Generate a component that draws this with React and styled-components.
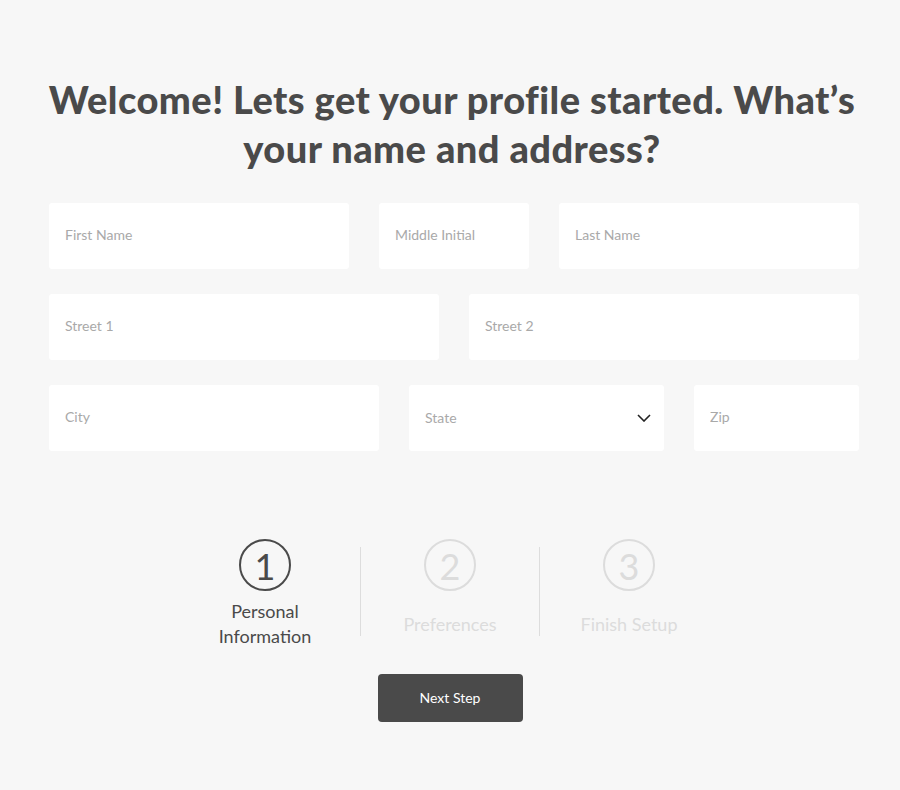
import React from "react";
import styled, { createGlobalStyle } from "styled-components";

const GlobalStyle = createGlobalStyle`
  * { box-sizing: border-box; }
  body {
    margin: 0;
    background: #f7f7f7;
    font-family: Lato, "Noto Sans", sans-serif;
  }
`;

const Page = styled.div`
  width: 900px;
  min-height: 790px;
  padding-top: 75px;
`;

const Title = styled.h1`
  margin: 0 0 30px 4px;
  padding: 0 40px;
  font-size: 38px;
  line-height: 49px;
  font-weight: 900;
  color: #4a4a4a;
  text-align: center;
  letter-spacing: 0.45px;
`;

const Row = styled.div`
  display: grid;
  grid-template-columns: ${props => props.cols};
  column-gap: 30px;
  width: 810px;
  margin: 0 0 25px 49px;
`;

const Field = styled.input`
  height: 66px;
  width: 100%;
  border: none;
  border-radius: 3px;
  background: #fff;
  padding: 0 16px 4px;
  font-family: Lato, "Noto Sans", sans-serif;
  font-size: 14px;
  color: #4a4a4a;
  outline: none;
  &::placeholder { color: #a9a9a9; }
`;

const SelectBox = styled.div`
  height: 66px;
  border-radius: 3px;
  background: #fff;
  padding: 0 13px 0 16px;
  display: flex;
  align-items: center;
  justify-content: space-between;
  font-size: 14px;
  color: #a9a9a9;
  span { margin-bottom: 2px; }
`;

const Stepper = styled.div`
  display: flex;
  justify-content: center;
  margin-top: 88px;
`;

const Step = styled.div`
  width: 178px;
  display: flex;
  flex-direction: column;
  align-items: center;
  color: ${props => (props.active ? "#4a4a4a" : "#dcdcdc")};
  &:first-child { padding-right: 12px; }
`;

const Circle = styled.div`
  width: 52px;
  height: 52px;
  border-radius: 50%;
  border: 2px solid currentColor;
  display: flex;
  align-items: center;
  justify-content: center;
  font-size: 36px;
  font-weight: 400;
  line-height: 1;
  padding-top: 2px;
`;

const Label = styled.div`
  height: 58px;
  display: flex;
  align-items: center;
  text-align: center;
  font-size: 18px;
  line-height: 25px;
  margin-top: 4px;
`;

const Divider = styled.div`
  width: 1px;
  background: #dddddd;
  margin-top: 8px;
  height: 89px;
`;

const Actions = styled.div`
  display: flex;
  justify-content: center;
  margin-top: 21px;
`;

const Button = styled.button`
  width: 145px;
  height: 48px;
  border: none;
  border-radius: 4px;
  background: #4a4a4a;
  color: #fff;
  font-family: Lato, "Noto Sans", sans-serif;
  font-size: 14px;
  padding-bottom: 2px;
  cursor: pointer;
`;

const Chevron = () => (
  <svg width="14" height="8" viewBox="0 0 14 8" fill="none">
    <path d="M1 1l6 6 6-6" stroke="#222" strokeWidth="1.6" />
  </svg>
);

export default function App() {
  return (
    <>
      <GlobalStyle />
      <Page>
        <Title>
          Welcome! Lets get your profile started. What’s your name and address?
        </Title>
        <Row cols="300px 150px 300px">
          <Field placeholder="First Name" />
          <Field placeholder="Middle Initial" />
          <Field placeholder="Last Name" />
        </Row>
        <Row cols="390px 390px">
          <Field placeholder="Street 1" />
          <Field placeholder="Street 2" />
        </Row>
        <Row cols="330px 255px 165px">
          <Field placeholder="City" />
          <SelectBox>
            <span>State</span>
            <Chevron />
          </SelectBox>
          <Field placeholder="Zip" />
        </Row>
        <Stepper>
          <Step active>
            <Circle>1</Circle>
            <Label>Personal<br />Information</Label>
          </Step>
          <Divider />
          <Step>
            <Circle>2</Circle>
            <Label>Preferences</Label>
          </Step>
          <Divider />
          <Step>
            <Circle>3</Circle>
            <Label>Finish Setup</Label>
          </Step>
        </Stepper>
        <Actions>
          <Button>Next Step</Button>
        </Actions>
      </Page>
    </>
  );
}
